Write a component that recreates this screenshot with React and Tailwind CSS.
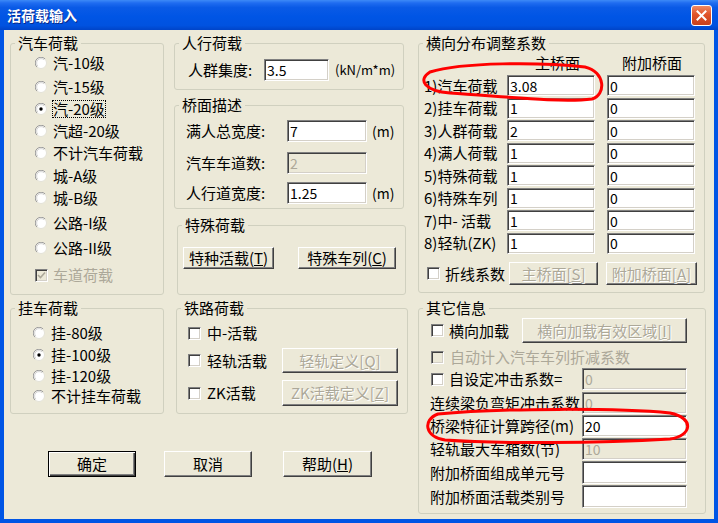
import React from 'react';

const sunken =
  'border border-t-[#808080] border-l-[#808080] border-b-white border-r-white shadow-[inset_1px_1px_0_#404040,inset_-1px_-1px_0_#d4d0c8]';

function Group({ title, className, children }) {
  return (
    <fieldset className={`min-w-0 border border-[#d0d0bf] rounded-[3px] ${className}`}>
      <legend className="ml-[4px] px-[3px] text-[15px] leading-[16px]">{title}</legend>
      {children}
    </fieldset>
  );
}

function Radio({ checked }) {
  return (
    <svg width="12" height="12" viewBox="0 0 12 12" className="shrink-0">
      <circle cx="6" cy="6" r="5.5" fill="#fff" stroke="#e4e2d8" />
      <path d="M1.9 10.1A5.5 5.5 0 0 1 10.1 1.9" fill="none" stroke="#9d9d9d" />
      <path d="M2.9 9.1A4.3 4.3 0 0 1 9.1 2.9" fill="none" stroke="#d6d6d6" />
      {checked && <circle cx="6" cy="6" r="1.7" fill="#000" />}
    </svg>
  );
}

function Check({ checked, disabled }) {
  return (
    <div
      className={`w-[13px] h-[13px] shrink-0 flex items-center justify-center ${sunken} ${
        disabled ? 'bg-[#ece9d8]' : 'bg-white'
      }`}
    >
      {checked && (
        <svg width="9" height="9" viewBox="0 0 9 9">
          <path d="M1 4l2.5 2.5L8 1.5" fill="none" stroke={disabled ? '#aca899' : '#000'} strokeWidth="1.6" />
        </svg>
      )}
    </div>
  );
}

function RadioRow({ label, checked, focus, className }) {
  return (
    <div className={`flex items-center ${className}`}>
      <Radio checked={checked} />
      {focus ? (
        <span className="ml-[5px] border border-dotted border-black">{label}</span>
      ) : (
        <span className="ml-[6px]">{label}</span>
      )}
    </div>
  );
}

function Field({ value, className, disabled }) {
  return (
    <div
      className={`flex items-center pl-[2px] text-[14px] ${sunken} ${
        disabled ? 'bg-[#ece9d8] text-[#aca899]' : 'bg-white'
      } ${className}`}
    >
      {value}
    </div>
  );
}

function Button({ children, className, disabled, isDefault }) {
  const edge = isDefault
    ? 'border border-black shadow-[inset_1px_1px_0_#fff,inset_-1px_-1px_0_#404040,inset_-2px_-2px_0_#808080]'
    : 'border border-t-white border-l-white border-b-[#404040] border-r-[#404040] shadow-[inset_-1px_-1px_0_#808080]';
  return (
    <div
      className={`flex items-center justify-center shrink-0 bg-[#ece9d8] ${edge} ${
        disabled ? 'text-[#aca899] [text-shadow:1px_1px_0_#fff]' : 'text-black'
      } ${className}`}
    >
      {children}
    </div>
  );
}

const coefRows = [
  ['1)汽车荷载', '3.08', 'h-[23px]'],
  ['2)挂车荷载', '1', 'h-[22px]'],
  ['3)人群荷载', '2', 'h-[23px]'],
  ['4)满人荷载', '1', 'h-[22px]'],
  ['5)特殊荷载', '1', 'h-[23px]'],
  ['6)特殊车列', '1', 'h-[22px]'],
  ['7)中- 活载', '1', 'h-[23px]'],
  ['8)轻轨(ZK)', '1', 'h-[22px]'],
];

export default function App() {
  return (
    <div className="relative w-[718px] h-[523px] overflow-hidden bg-[#0055e5] flex flex-col text-[15px] leading-[16px] text-black font-['Noto_Sans_CJK_SC','Noto_Sans',sans-serif] select-none">
      {/* title bar */}
      <div className="h-[30px] shrink-0 flex items-center pl-[7px] bg-[linear-gradient(180deg,#3d8af7_0%,#1f6cf0_10%,#0a5ae6_25%,#0055e5_55%,#0052e0_85%,#0044c8_100%)]">
        <span className="text-white font-bold text-[14px] [text-shadow:1px_1px_0_#0a2a8a]">活荷载输入</span>
        <div className="ml-auto mr-[6px] w-[21px] h-[21px] rounded-[3px] border border-white bg-[linear-gradient(180deg,#f08a64_0%,#e0542a_45%,#c8401c_100%)] flex items-center justify-center">
          <svg width="11" height="11" viewBox="0 0 11 11">
            <path d="M1.5 1.5l8 8M9.5 1.5l-8 8" stroke="#fff" strokeWidth="2" strokeLinecap="square" />
          </svg>
        </div>
      </div>

      {/* client area */}
      <div className="mx-[4px] h-[489px] shrink-0 bg-[#ece9d8] flex pl-[6px] pt-[5px] gap-[10px]">
        {/* left + middle */}
        <div className="w-[398px] flex flex-col">
          <div className="flex h-[260px]">
            <Group title="汽车荷载" className="w-[154px] h-[260px]">
              <div className="pl-[24px] flex flex-col">
                <RadioRow label="汽-10级" className="h-[22px] mt-[1px]" />
                <RadioRow label="汽-15级" className="h-[22px] mt-[2px]" />
                <RadioRow label="汽-20级" checked focus className="h-[22px]" />
                <RadioRow label="汽超-20级" className="h-[22px]" />
                <RadioRow label="不计汽车荷载" className="h-[22px]" />
                <RadioRow label="城-A级" className="h-[22px] mt-[1px]" />
                <RadioRow label="城-B级" className="h-[22px]" />
                <RadioRow label="公路-I级" className="h-[22px] mt-[3px]" />
                <RadioRow label="公路-II级" className="h-[22px] mt-[3px]" />
                <div className="flex items-center h-[22px] mt-[5px]">
                  <Check checked disabled />
                  <span className="ml-[5px] text-[#aca899]">车道荷载</span>
                </div>
              </div>
            </Group>

            <div className="ml-[10px] w-[232px] flex flex-col">
              <Group title="人行荷载" className="w-[230px] h-[55px]">
                <div className="flex items-center h-[22px] mt-[8px] pl-[13px]">
                  <span className="w-[76px]">人群集度:</span>
                  <Field value="3.5" className="w-[65px] h-[22px]" />
                  <span className="ml-[6px] text-[13px]">(kN/m*m)</span>
                </div>
              </Group>

              <Group title="桥面描述" className="mt-[7px] w-[230px] h-[112px]">
                <div className="pl-[11px] flex flex-col">
                  <div className="flex items-center h-[22px] mt-[7px]">
                    <span className="w-[101px]">满人总宽度:</span>
                    <Field value="7" className="w-[80px] h-[22px]" />
                    <span className="ml-[5px] text-[14px]">(m)</span>
                  </div>
                  <div className="flex items-center h-[22px] mt-[10px]">
                    <span className="w-[101px]">汽车车道数:</span>
                    <Field value="2" disabled className="w-[80px] h-[22px]" />
                  </div>
                  <div className="flex items-center h-[22px] mt-[8px]">
                    <span className="w-[101px]">人行道宽度:</span>
                    <Field value="1.25" className="w-[80px] h-[22px]" />
                    <span className="ml-[5px] text-[14px]">(m)</span>
                  </div>
                </div>
              </Group>

              <Group title="特殊荷载" className="mt-[8px] ml-[3px] w-[229px] h-[78px]">
                <div className="flex mt-[14px] pl-[5px] gap-[24px]">
                  <Button className="w-[91px] h-[22px]">
                    特种活载(<u>T</u>)
                  </Button>
                  <Button className="w-[98px] h-[22px]">
                    特殊车列(<u>C</u>)
                  </Button>
                </div>
              </Group>
            </div>
          </div>

          <div className="flex mt-[5px]">
            <Group title="挂车荷载" className="w-[154px] h-[114px]">
              <div className="pl-[22px] flex flex-col">
                <RadioRow label="挂-80级" className="h-[20px] mt-[7px]" />
                <RadioRow label="挂-100级" checked className="h-[20px] mt-[2px]" />
                <RadioRow label="挂-120级" className="h-[20px] mt-[1px]" />
                <RadioRow label="不计挂车荷载" className="h-[20px]" />
              </div>
            </Group>

            <Group title="铁路荷载" className="ml-[12px] w-[232px] h-[114px]">
              <div className="pl-[11px] flex flex-col">
                <div className="flex items-center h-[20px] mt-[7px]">
                  <Check />
                  <span className="ml-[6px]">中-活载</span>
                </div>
                <div className="flex items-center h-[25px] mt-[5px]">
                  <div className="w-[94px] flex items-center">
                    <Check />
                    <span className="ml-[6px]">轻轨活载</span>
                  </div>
                  <Button disabled className="w-[116px] h-[25px]">
                    轻轨定义[<u>Q</u>]
                  </Button>
                </div>
                <div className="flex items-center h-[26px] mt-[7px]">
                  <div className="w-[94px] flex items-center">
                    <Check />
                    <span className="ml-[6px]">ZK活载</span>
                  </div>
                  <Button disabled className="w-[116px] h-[26px]">
                    ZK活载定义[<u>Z</u>]
                  </Button>
                </div>
              </div>
            </Group>
          </div>

          <div className="flex mt-[37px]">
            <Button isDefault className="ml-[38px] w-[88px] h-[26px]">
              确定
            </Button>
            <Button className="ml-[28px] w-[88px] h-[26px]">取消</Button>
            <Button className="ml-[31px] w-[89px] h-[26px]">
              帮助(<u>H</u>)
            </Button>
          </div>
        </div>

        {/* right column */}
        <div className="w-[288px] flex flex-col">
          <Group title="横向分布调整系数" className="w-[287px] h-[258px]">
            <div className="flex items-center h-[23px]">
              <span className="ml-[116px] w-[45px]">主桥面</span>
              <span className="ml-[42px]">附加桥面</span>
            </div>
            {coefRows.map(([label, main, h]) => (
              <div key={label} className={`flex items-center pl-[5px] ${h}`}>
                <span className="w-[83px] whitespace-nowrap">{label}</span>
                <Field value={main} className="w-[88px] h-[21px]" />
                <Field value="0" className="ml-[12px] w-[88px] h-[21px]" />
              </div>
            ))}
            <div className="flex items-center h-[23px] mt-[8px] pl-[8px]">
              <Check />
              <span className="ml-[5px] w-[64px]">折线系数</span>
              <Button disabled className="w-[89px] h-[23px]">
                主桥面[<u>S</u>]
              </Button>
              <Button disabled className="ml-[8px] w-[91px] h-[23px]">
                附加桥面[<u>A</u>]
              </Button>
            </div>
          </Group>

          <Group title="其它信息" className="mt-[7px] w-[288px] h-[214px]">
            <div className="flex flex-col">
              <div className="flex items-center h-[25px] mt-[2px]">
                <div className="w-[103px] pl-[12px] flex items-center">
                  <Check />
                  <span className="ml-[5px]">横向加载</span>
                </div>
                <Button disabled className="w-[165px] h-[25px]">
                  横向加载有效区域[<u>I</u>]
                </Button>
              </div>
              <div className="flex items-center h-[20px] mt-[4px] pl-[12px]">
                <Check disabled />
                <span className="ml-[6px] text-[#aca899]">自动计入汽车车列折减系数</span>
              </div>
              <div className="flex items-center h-[22px] mt-[1px]">
                <div className="w-[163px] pl-[12px] flex items-center">
                  <Check />
                  <span className="ml-[5px]">自设定冲击系数=</span>
                </div>
                <Field value="0" disabled className="w-[105px] h-[22px]" />
              </div>
              <div className="flex items-center h-[22px] mt-[2px]">
                <span className="w-[163px] pl-[11px] whitespace-nowrap">连续梁负弯矩冲击系数</span>
                <Field value="0" disabled className="w-[105px] h-[22px]" />
              </div>
              <div className="flex items-center h-[22px] mt-[1px]">
                <span className="w-[163px] pl-[11px] whitespace-nowrap">桥梁特征计算跨径(m)</span>
                <Field value="20" className="w-[105px] h-[22px]" />
              </div>
              <div className="flex items-center h-[22px] mt-[1px]">
                <span className="w-[163px] pl-[11px] whitespace-nowrap">轻轨最大车箱数(节)</span>
                <Field value="10" disabled className="w-[105px] h-[22px]" />
              </div>
              <div className="flex items-center h-[23px] mt-[1px]">
                <span className="w-[163px] pl-[11px] whitespace-nowrap">附加桥面组成单元号</span>
                <Field value="" className="w-[105px] h-[23px]" />
              </div>
              <div className="flex items-center h-[23px] mt-[1px]">
                <span className="w-[163px] pl-[11px] whitespace-nowrap">附加桥面活载类别号</span>
                <Field value="" className="w-[105px] h-[23px]" />
              </div>
            </div>
          </Group>
        </div>
      </div>

      {/* red hand-drawn marks */}
      <svg className="absolute inset-0 pointer-events-none" width="718" height="523" viewBox="0 0 718 523">
        <path
          d="M430 72 C462 62 540 62 585 67 C606 72 606 95 592 99 C560 103 500 96 450 93 C425 91 417 80 430 72"
          fill="none"
          stroke="#ff0000"
          strokeWidth="3"
          strokeLinecap="round"
        />
        <path
          d="M438 414 C500 408 620 408 670 413 C695 418 692 436 670 439 C600 443 500 444 445 440 C425 437 422 420 438 414"
          fill="none"
          stroke="#ff0000"
          strokeWidth="3"
          strokeLinecap="round"
        />
      </svg>
    </div>
  );
}
